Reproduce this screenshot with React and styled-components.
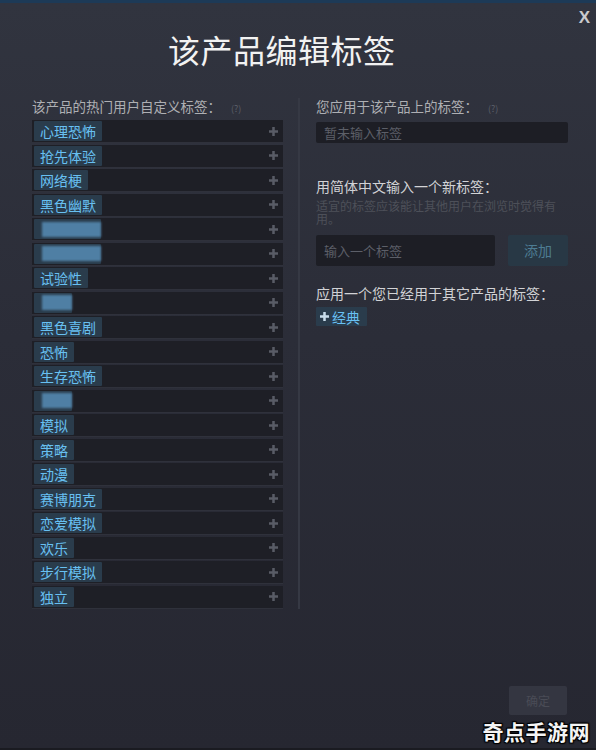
import React from 'react';
import styled, { createGlobalStyle } from 'styled-components';

const GlobalStyle = createGlobalStyle`
    body {
        margin: 0;
        background: #262731;
        font-family: "Noto Sans CJK SC", "Noto Sans", sans-serif;
    }
`

const Modal = styled.div`
    position: relative;
    box-sizing: border-box;
    width: 596px;
    height: 750px;
    display: flex;
    flex-direction: column;
    background: linear-gradient(180deg, #31343f 0%, #2b2d38 45%, #262731 100%);
    border-top: 3px solid #1d3a57;
    border-bottom: 2px solid #1a1b21;
    overflow: hidden;
`

const Close = styled.div`
    position: absolute;
    top: 5px;
    right: 6px;
    font-family: "Liberation Sans", Arial, sans-serif;
    font-size: 17px;
    font-weight: 700;
    color: #c9cacd;
`

const Title = styled.h1`
    margin: 26px 0 0 0;
    padding-left: 168px;
    font-size: 32px;
    line-height: 40px;
    font-weight: 400;
    color: #f2f2f2;
    letter-spacing: 0.5px;
`

const Columns = styled.div`
    display: flex;
    margin-top: 29px;
    padding: 0 28px 0 32px;
`

const LeftCol = styled.div`
    width: 251px;
    padding-right: 15px;
    border-right: 2px solid #363944;
`

const RightCol = styled.div`
    width: 252px;
    padding-left: 16px;
`

const Heading = styled.div`
    font-size: ${p => p.$big ? '14px' : '13.5px'};
    line-height: ${p => p.$big ? '18px' : '16px'};
    color: ${p => p.$big ? '#d2d3d6' : '#aeafb3'};
    margin-top: ${p => p.$top || 0}px;
    white-space: nowrap;

    small {
        font-size: 9px;
        color: #5d606a;
        margin-left: 10px;
    }
`

const TagList = styled.div`
    display: flex;
    flex-direction: column;
    gap: 1.5px;
    margin-top: 3px;
`

const Row = styled.div`
    display: flex;
    align-items: center;
    justify-content: space-between;
    height: 22px;
    background: #1e1f26;
    border-bottom: 1px solid #2f313b;
    padding-left: 2px;
    padding-right: 5px;
`

const Chip = styled.span`
    display: inline-flex;
    align-items: center;
    gap: 3px;
    height: 20px;
    padding: 0 6px;
    background: #2a3c4c;
    color: #68c0f2;
    font-size: 14px;
    line-height: 20px;
    border-radius: 1px;
`

const Smudge = styled.span`
    display: block;
    width: ${p => p.$w}px;
    height: 15px;
    margin-left: 2px;
    background: #4f7fa4;
    filter: blur(1.2px);
`

const Plus = ({ color = '#595c66', size = 9 }) => (
    <svg width={size} height={size} viewBox="0 0 10 10">
        <path d="M3.6 0h2.8v3.6H10v2.8H6.4V10H3.6V6.4H0V3.6h3.6z" fill={color} />
    </svg>
)

const Field = styled.div`
    box-sizing: border-box;
    height: ${p => p.$h}px;
    width: ${p => p.$w ? p.$w + 'px' : '100%'};
    margin-top: ${p => p.$top || 0}px;
    background: #1d1e25;
    color: #5c5f68;
    font-size: 13px;
    line-height: ${p => p.$h}px;
    padding-left: ${p => p.$pad}px;
    border-radius: 2px;
`

const Hint = styled.p`
    margin: 4px 0 0 0;
    font-size: 12px;
    line-height: 13px;
    color: #4d5059;
`

const AddRow = styled.div`
    display: flex;
    gap: 13px;
    margin-top: 10px;
`

const AddButton = styled.div`
    width: 60px;
    height: 31px;
    background: #283845;
    color: #4d7c93;
    font-size: 14px;
    line-height: 31px;
    text-align: center;
    border-radius: 2px;
`

const AppliedChip = styled(Chip)`
    margin-top: 5px;
    height: 19px;
    padding: 0 7px 0 4px;
`

const Footer = styled.div`
    margin-top: auto;
    display: flex;
    justify-content: flex-end;
    padding: 0 29px 33px 0;
`

const FooterButton = styled.div`
    width: 58px;
    height: 29px;
    background: #343641;
    border-radius: 2px;
    color: #4a4c56;
    font-size: 12px;
    line-height: 29px;
    text-align: center;
`

const Watermark = styled.div`
    position: absolute;
    right: 6px;
    bottom: 2px;
    font-size: 21px;
    font-weight: 700;
    color: #f4f4f4;
    letter-spacing: 0.5px;
    text-shadow: 0 0 2px #000, 1px 1px 1px #000, -1px -1px 1px #000, 1px -1px 1px #000, -1px 1px 1px #000;
`

const tags = [
    '心理恐怖', '抢先体验', '网络梗', '黑色幽默', { blur: 59 }, { blur: 59 },
    '试验性', { blur: 30 }, '黑色喜剧', '恐怖', '生存恐怖', { blur: 30 },
    '模拟', '策略', '动漫', '赛博朋克', '恋爱模拟', '欢乐', '步行模拟', '独立'
]

export default function App() {
    return (
        <>
            <GlobalStyle />
            <Modal>
                <Close>X</Close>
                <Title>该产品编辑标签</Title>
                <Columns>
                    <LeftCol>
                        <Heading>该产品的热门用户自定义标签：<small>(?)</small></Heading>
                        <TagList>
                            {tags.map((t, i) => (
                                <Row key={i}>
                                    {typeof t === 'string'
                                        ? <Chip>{t}</Chip>
                                        : <Chip style={{ paddingLeft: 6, paddingRight: 0 }}><Smudge $w={t.blur} /></Chip>}
                                    <Plus />
                                </Row>
                            ))}
                        </TagList>
                    </LeftCol>
                    <RightCol>
                        <Heading>您应用于该产品上的标签：<small>(?)</small></Heading>
                        <Field $h={21} $top={5} $pad={8}>暂未输入标签</Field>
                        <Heading $big $top={34}>用简体中文输入一个新标签：</Heading>
                        <Hint>适宜的标签应该能让其他用户在浏览时觉得有用。</Hint>
                        <AddRow>
                            <Field $h={31} $w={179} $pad={8}>输入一个标签</Field>
                            <AddButton>添加</AddButton>
                        </AddRow>
                        <Heading $big $top={18}>应用一个您已经用于其它产品的标签：</Heading>
                        <AppliedChip><Plus color="#c8dcea" size={9} />经典</AppliedChip>
                    </RightCol>
                </Columns>
                <Footer>
                    <FooterButton>确定</FooterButton>
                </Footer>
                <Watermark>奇点手游网</Watermark>
            </Modal>
        </>
    )
}
